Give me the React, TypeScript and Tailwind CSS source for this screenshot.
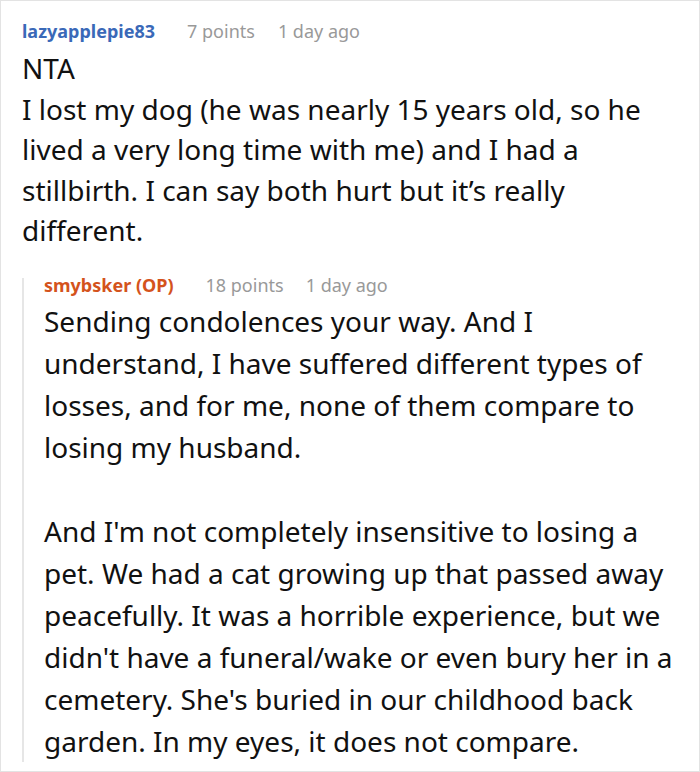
export default function App() {
  return (
    <div className="h-[772px] w-[700px] overflow-hidden border border-[#e3e3e3] bg-white pl-[21px] pr-[6px] pt-[18px] font-['Noto_Sans',sans-serif] text-[#111]">
      <div className="flex h-[24px] items-center text-[18px] leading-[24px]">
        <span className="font-bold text-[#3a69b8]">lazyapplepie83</span>
        <span className="ml-[32px] text-[#999]">7 points</span>
        <span className="ml-[23px] text-[#999]">1 day ago</span>
      </div>
      <div className="mt-[5px] text-[28px] leading-[40.5px]">
        <p>NTA</p>
        <p>
          I lost my dog (he was nearly 15 years old, so he lived a very long time with me) and I had a
          stillbirth. I can say both hurt but it’s really different.
        </p>
      </div>

      <div className="mt-[27px] border-l-2 border-[#e6e6e6] pl-[20px]">
        <div className="flex h-[14px] items-center text-[18px] leading-[14px]">
          <span className="font-bold text-[#d4531c]">smybsker (OP)</span>
          <span className="ml-[32px] text-[#999]">18 points</span>
          <span className="ml-[22px] text-[#999]">1 day ago</span>
        </div>
        <div className="mt-[8px] text-[28px] leading-[42px]">
          <p>
            Sending condolences your way. And I understand, I have suffered different types of losses,
            and for me, none of them compare to losing my husband.
          </p>
          <p className="mt-[42px]">
            And I'm not completely insensitive to losing a pet. We had a cat growing up that passed away
            peacefully. It was a horrible experience, but we didn't have a funeral/wake or even bury her
            in a cemetery. She's buried in our childhood back garden. In my eyes, it does not compare.
          </p>
        </div>
      </div>
    </div>
  );
}
